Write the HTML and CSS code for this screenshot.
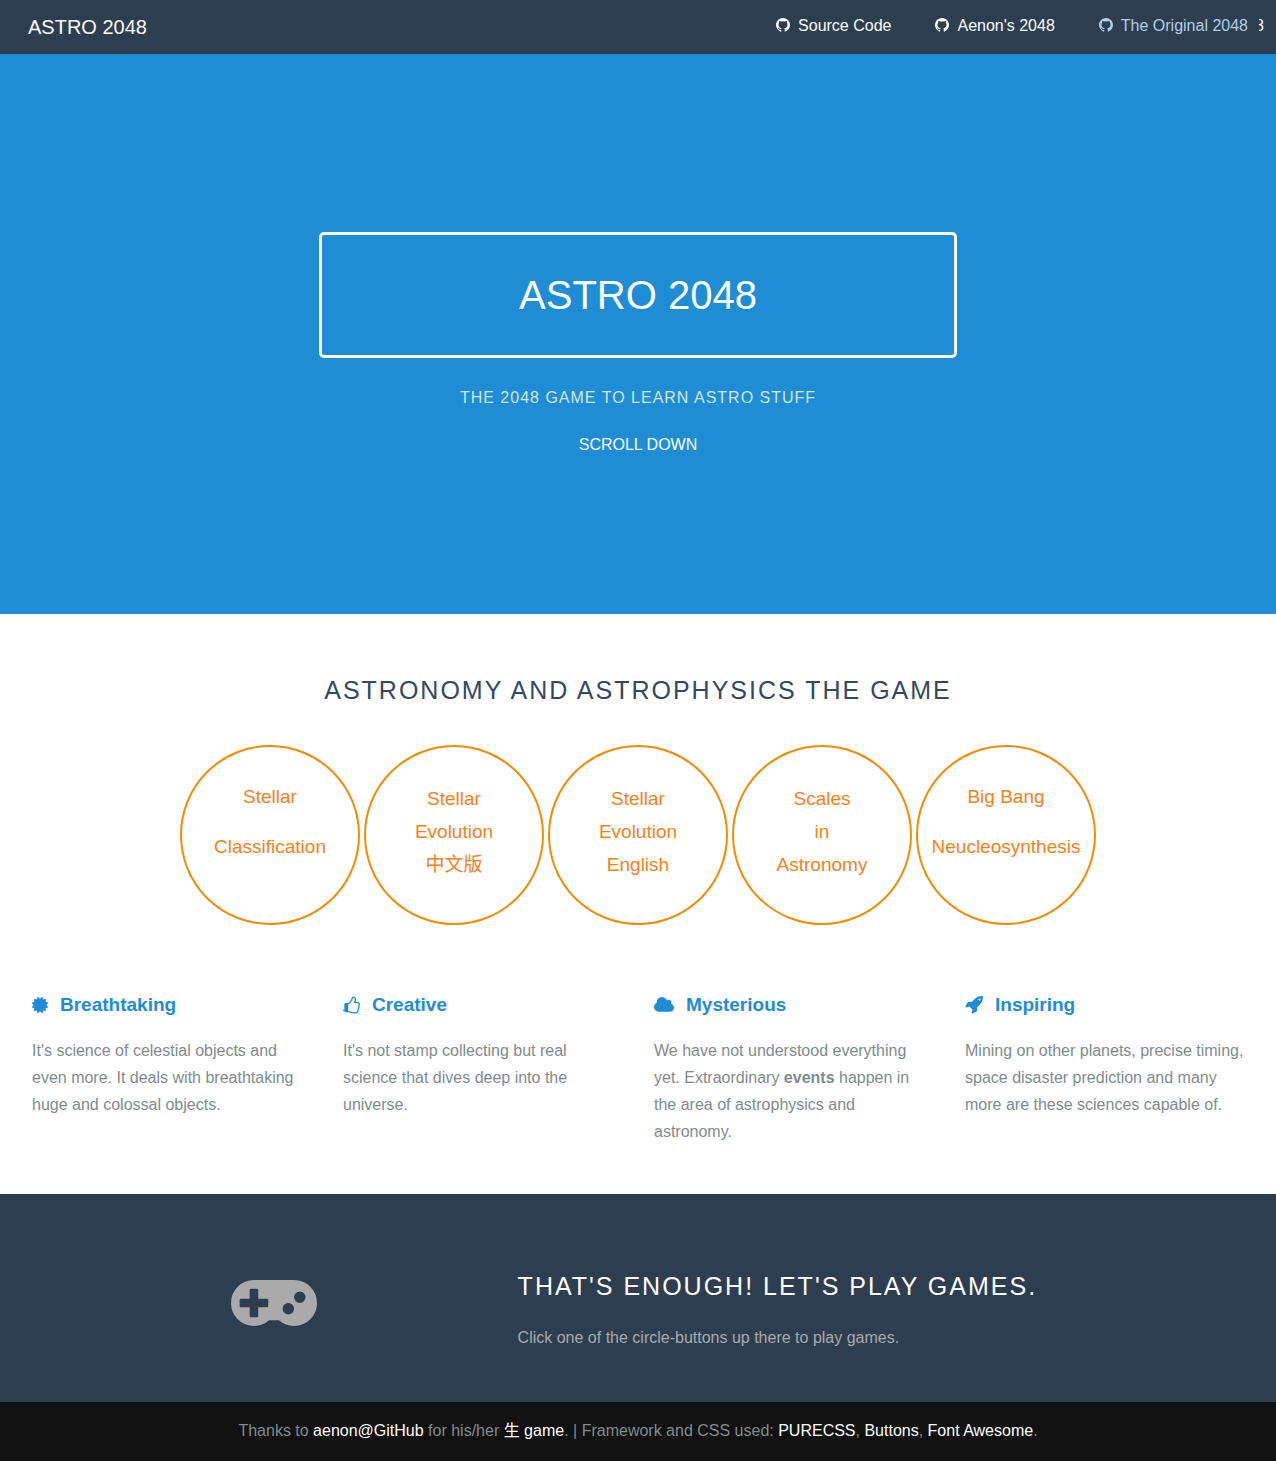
FILE: index.html
```html
<!DOCTYPE html>
<html lang="en">
<head>
<meta charset="utf-8">
<meta name="viewport" content="width=device-width, initial-scale=1">
<title>Astro 2048</title>
<link rel="stylesheet" href="styles.css">
</head>
<body>
<svg class="sprite" aria-hidden="true">
  <symbol id="github" viewBox="128 128 1536 1536"><path d="M896 128q209 0 385.5 103t279.5 279.5 103 385.5q0 251-146.5 451.5t-378.5 277.5q-27 5-40-7t-13-30q0-3 .5-76.5t.5-134.5q0-97-52-142 57-6 102.5-18t94-39 81-66.5 53-105 20.5-150.5q0-119-79-206 37-91-8-204-28-9-81 11t-92 44l-38 24q-93-26-192-26t-192 26q-16-11-42.5-27t-83.5-38.5-85-13.5q-45 113-8 204-79 87-79 206 0 85 20.5 150t52.5 105 80.5 67 94 39 102.5 18q-39 36-49 103-21 10-45 15t-57 5-65.5-21.5-55.5-62.5q-19-32-48.5-52t-49.5-24l-20-3q-21 0-29 4.5t-5 11.5 9 14 13 12l7 5q22 10 43.5 38t31.5 51l10 23q13 38 44 61.5t67 30 69.5 7 55.5-3.5l23-4q0 38 .5 88.5t.5 54.5q0 18-13 30t-40 7q-232-77-378.5-277.5t-146.5-451.5q0-209 103-385.5t279.5-279.5 385.5-103z"/></symbol>
</svg>

<header class="header">
  <a class="brand" href="#top">ASTRO 2048</a>
  <nav>
    <ul class="menu">
      <li><a href="#source"><svg class="menu-icon" aria-hidden="true"><use href="#github"/></svg>Source Code</a></li>
      <li><a href="#aenon"><svg class="menu-icon" aria-hidden="true"><use href="#github"/></svg>Aenon's 2048</a></li>
      <li class="selected"><a href="#original"><svg class="menu-icon" aria-hidden="true"><use href="#github"/></svg>The Original 2048</a></li>
      <li class="cut" aria-hidden="true"><span>8</span></li>
    </ul>
  </nav>
</header>

<main>
  <section class="splash" id="top">
    <h1 class="splash-head">ASTRO 2048</h1>
    <p class="splash-subhead">The 2048 game to learn astro stuff</p>
    <p class="splash-more"><a href="#games">SCROLL DOWN</a></p>
  </section>

  <section class="content" id="games">
    <h2 class="content-head">Astronomy and Astrophysics the game</h2>
    <div class="circles">
      <a class="circle two-line" href="#classification"><span>Stellar</span><span>Classification</span></a>
      <a class="circle" href="#evolution-zh"><span>Stellar</span><span>Evolution</span><span lang="zh">中文版</span></a>
      <a class="circle" href="#evolution-en"><span>Stellar</span><span>Evolution</span><span>English</span></a>
      <a class="circle" href="#scales"><span>Scales</span><span>in</span><span>Astronomy</span></a>
      <a class="circle two-line" href="#bigbang"><span>Big Bang</span><span>Neucleosynthesis</span></a>
    </div>
    <div class="features">
      <article class="feature">
        <h3><svg class="icon-16" viewBox="128 128 1536 1536" aria-hidden="true"><path d="M1504 896l138 135q30 28 20 70-12 41-52 51l-188 48 53 186q12 41-19 70-29 31-70 19l-186-53-48 188q-10 40-51 52-12 2-19 2-31 0-51-22l-135-138-135 138q-28 30-70 20-41-11-51-52l-48-188-186 53q-41 12-70-19-31-29-19-70l53-186-188-48q-40-10-52-51-10-42 20-70l138-135-138-135q-30-28-20-70 12-41 52-51l188-48-53-186q-12-41 19-70 29-31 70-19l186 53 48-188q10-41 51-51 41-12 70 19l135 139 135-139q29-30 70-19 41 10 51 51l48 188 186-53q41-12 70 19 31 29 19 70l-53 186 188 48q40 10 52 51 10 42-20 70z"/></svg>Breathtaking</h3>
        <p>It's science of celestial objects and even more. It deals with breathtaking huge and colossal objects.</p>
      </article>
      <article class="feature">
        <h3><svg class="icon-17" viewBox="128 128 1664 1664" aria-hidden="true"><path d="M256 1472q0-26-19-45t-45-19-45 19-19 45 19 45 45 19 45-19 19-45zm1408-576q0-51-39-89.5t-89-38.5h-352q0-58 48-159.5t48-160.5q0-98-32-145t-128-47q-26 26-38 85t-30.5 125.5-59.5 109.5q-22 23-77 91-4 5-23 30t-31.5 41-34.5 42.5-40 44-38.5 35.5-40 27-35.5 9h-32v640h32q13 0 31.5 3t33 6.5 38 11 35 11.5 35.5 12.5 29 10.5q211 73 342 73h121q192 0 192-167 0-26-5-56 30-16 47.5-52.5t17.5-73.5-18-69q53-50 53-119 0-25-10-55.5t-25-47.5q32-1 53.5-47t21.5-81zm128-1q0 89-49 163 9 33 9 69 0 77-38 144 3 21 3 43 0 101-60 178 1 139-85 219.5t-227 80.5h-129q-96 0-189.5-22.5t-216.5-65.5q-116-40-138-40h-288q-53 0-90.5-37.5t-37.5-90.5v-640q0-53 37.5-90.5t90.5-37.5h274q36-24 137-155 58-75 107-128 24-25 35.5-85.5t30.5-126.5 62-108q39-37 90-37 84 0 151 32.5t102 101.5 35 186q0 93-48 192h176q104 0 180 76t76 179z"/></svg>Creative</h3>
        <p>It's not stamp collecting but real science that dives deep into the universe.</p>
      </article>
      <article class="feature">
        <h3><svg class="icon-20" viewBox="64 256 1920 1280" aria-hidden="true"><path d="M1984 1152q0 159-112.5 271.5t-271.5 112.5h-1088q-185 0-316.5-131.5t-131.5-316.5q0-132 71-241.5t187-163.5q-2-28-2-43 0-212 150-362t362-150q158 0 286.5 88t187.5 230q70-62 166-62 106 0 181 75t75 181q0 75-41 138 129 30 213 134.5t84 239.5z"/></svg>Mysterious</h3>
        <p>We have not understood everything yet. Extraordinary <b>events</b> happen in the area of astrophysics and astronomy.</p>
      </article>
      <article class="feature">
        <h3><svg class="icon-18" viewBox="0 128 1664 1664" aria-hidden="true"><path d="M1440 448q0-40-28-68t-68-28-68 28-28 68 28 68 68 28 68-28 28-68zm224-288q0 249-75.5 430.5t-253.5 360.5q-81 80-195 176l-20 379q-2 16-16 26l-384 224q-7 4-16 4-12 0-23-9l-64-64q-13-14-8-32l85-276-281-281-276 85q-3 1-9 1-14 0-23-9l-64-64q-17-19-5-39l224-384q10-14 26-16l379-20q96-114 176-195 188-187 358-258t431-71q14 0 24 9.5t10 22.5z"/></svg>Inspiring</h3>
        <p>Mining on other planets, precise timing, space disaster prediction and many more are these sciences capable of.</p>
      </article>
    </div>
  </section>

  <section class="ribbon">
    <svg class="gamepad" viewBox="0 512 1920 1024" aria-hidden="true"><path d="M832 1088v-128q0-14-9-23t-23-9h-192v-192q0-14-9-23t-23-9h-128q-14 0-23 9t-9 23v192h-192q-14 0-23 9t-9 23v128q0 14 9 23t23 9h192v192q0 14 9 23t23 9h128q14 0 23-9t9-23v-192h192q14 0 23-9t9-23zm576 64q0-53-37.5-90.5t-90.5-37.5-90.5 37.5-37.5 90.5 37.5 90.5 90.5 37.5 90.5-37.5 37.5-90.5zm256-256q0-53-37.5-90.5t-90.5-37.5-90.5 37.5-37.5 90.5 37.5 90.5 90.5 37.5 90.5-37.5 37.5-90.5zm256 128q0 212-150 362t-362 150q-192 0-338-128h-220q-146 128-338 128-212 0-362-150t-150-362 150-362 362-150h896q212 0 362 150t150 362z"/></svg>
    <div class="ribbon-text">
      <h2 class="content-head">That's enough! Let's play games.</h2>
      <p>Click one of the circle-buttons up there to play games.</p>
    </div>
  </section>
</main>

<footer class="footer">
  Thanks to <a href="#github-aenon">aenon@GitHub</a> for his/her <a href="#game">生 game</a>. | Framework and CSS used: <a href="#pure">PURECSS</a>, <a href="#buttons">Buttons</a>, <a href="#fa">Font Awesome</a>.
</footer>
</body>
</html>
```
FILE: styles.css
```css
* { box-sizing: border-box; }
body {
  margin: 0;
  font: 16px/27px "Liberation Sans", Arial, "Noto Sans CJK SC", sans-serif;
  color: #7f8c8d;
  background: #fff;
}
h1, h2, h3, p, ul { margin: 0; padding: 0; }
a { color: inherit; text-decoration: none; }
svg { fill: currentColor; }
.sprite { display: none; }

.header {
  display: flex;
  justify-content: space-between;
  align-items: center;
  height: 54px;
  padding: 0 12px 0 28px;
  background: #2d3e50;
  color: #fff;
}
.brand { font-size: 20px; }
.menu { display: flex; list-style: none; padding-bottom: 4px; }
.menu li { padding-right: 44px; }
.menu a { display: flex; align-items: center; }
.menu-icon { width: 14px; height: 14px; margin-right: 8px; }
.menu .selected { color: #aecfe5; padding-right: 11px; }
.menu .cut {
  display: flex;
  justify-content: flex-end;
  width: 5px;
  padding: 0;
  overflow: hidden;
}

.splash {
  display: flex;
  flex-direction: column;
  align-items: center;
  min-height: 560px;
  padding: 178px 0 48px;
  background: #1f8dd6;
  color: #fff;
  text-align: center;
}
.splash-head {
  width: 50%;
  padding: 30px 16px;
  border: 3px solid #fff;
  border-radius: 5px;
  font-size: 40px;
  line-height: 60px;
  font-weight: 400;
}
.splash-subhead {
  margin-top: 26px;
  color: #d2e8f7;
  text-transform: uppercase;
  letter-spacing: 1px;
}
.splash-more { margin-top: 20px; }

.content { padding: 60px 16px 49px; }
.content-head {
  font-size: 25px;
  line-height: 32px;
  font-weight: 400;
  letter-spacing: 2px;
  text-transform: uppercase;
  color: #34495e;
}
.content > .content-head { text-align: center; }
.circles {
  display: flex;
  flex-wrap: wrap;
  justify-content: center;
  gap: 4px;
  margin-top: 39px;
}
.circle {
  display: flex;
  flex-direction: column;
  align-items: center;
  width: 180px;
  height: 180px;
  padding-top: 35px;
  border: 2px solid #f18d05;
  border-radius: 50%;
  color: #f58220;
  font-size: 19px;
  line-height: 33px;
}
.two-line { padding-top: 25px; line-height: 50px; }
.features {
  display: grid;
  grid-template-columns: repeat(auto-fit, minmax(240px, 1fr));
  margin-top: 66px;
}
.feature { padding: 0 16px; }
.feature h3 {
  display: flex;
  align-items: center;
  gap: 12px;
  margin-bottom: 18px;
  color: #1f8dd6;
  font-size: 19px;
  line-height: 28px;
}
.icon-16 { width: 16px; height: 18px; }
.icon-17 { width: 17px; height: 18px; }
.icon-18 { width: 18px; height: 18px; }
.icon-20 { width: 20px; height: 18px; }

.ribbon {
  display: grid;
  grid-template-columns: 5fr 8fr;
  padding: 76px 47px 51px;
  background: #2d3e50;
  color: #aaa;
}
.gamepad { width: 86px; height: 46px; margin-top: 10px; justify-self: center; }
.ribbon-text { padding: 0 16px; }
.ribbon .content-head { margin-bottom: 22px; color: #fff; }

.footer {
  padding: 15px 16px 17px;
  background: #111;
  text-align: center;
}
.footer a { color: #fff; }
```
